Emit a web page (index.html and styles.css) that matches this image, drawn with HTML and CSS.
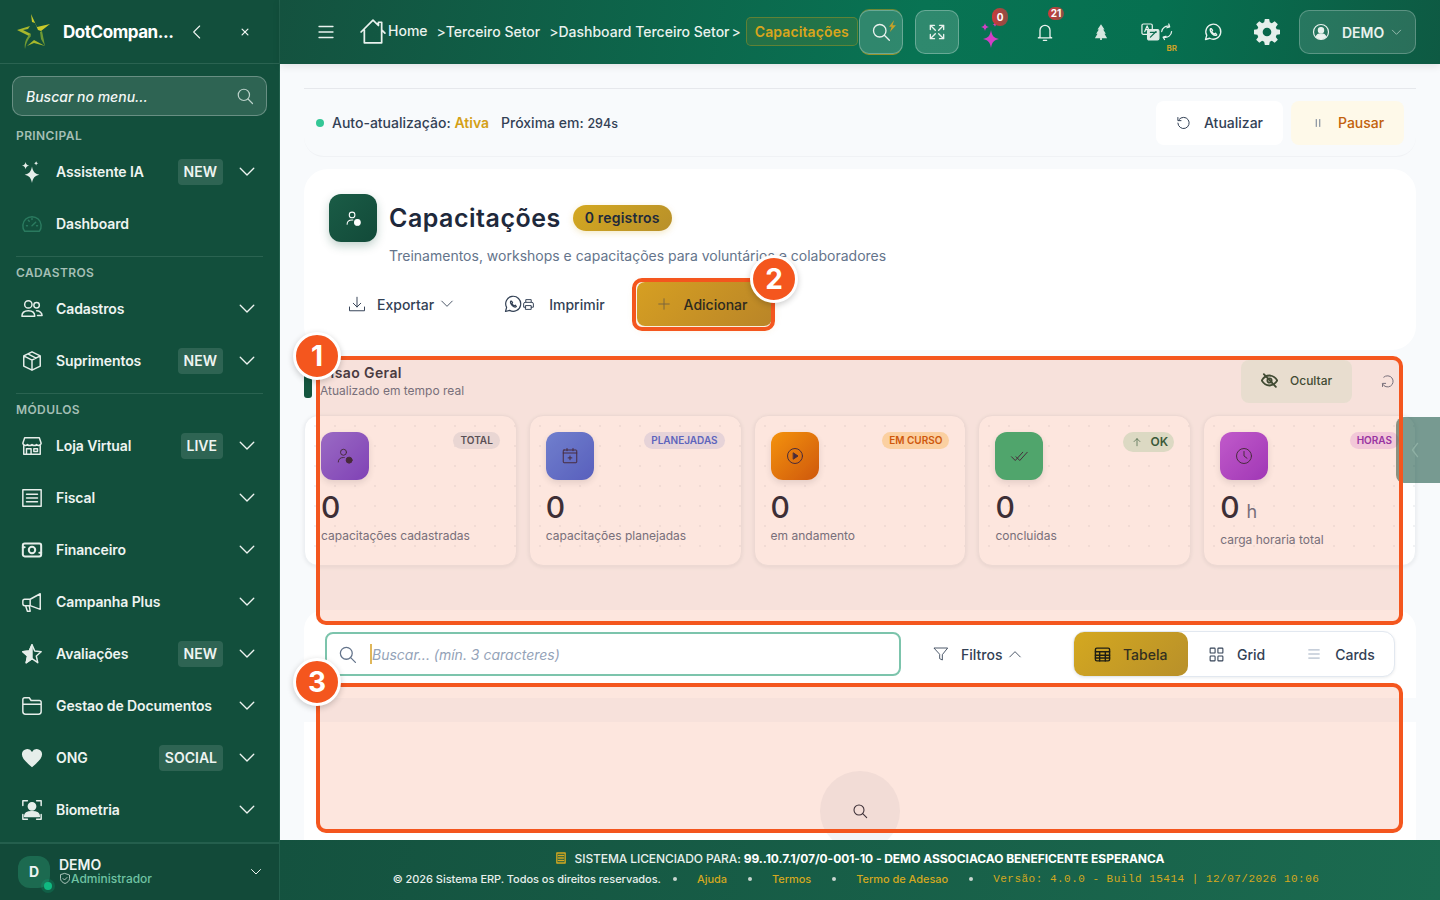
FILE: index.html
```html
<!DOCTYPE html>
<html lang="pt-BR">

<head>
    <meta charset="UTF-8">
    <meta name="viewport" content="width=device-width, initial-scale=1.0">
    <title>Capacitações</title>
    <link rel="stylesheet" href="styles.css">
</head>

<body>
    <svg class="sprite" aria-hidden="true">
        <symbol id="chev-down" viewBox="0 0 24 24"><path d="M3 7l9 9 9-9"/></symbol>
        <symbol id="search" viewBox="0 0 24 24"><circle cx="10.5" cy="10.5" r="7.5"/><path d="M16 16l6 6"/></symbol>
    </svg>

    <div class="app">
        <aside class="sidebar">
            <div class="brand">
                <svg class="brand-logo" viewBox="0 0 36 38">
                    <path class="logo-a" d="M16 1l6 13 13-3-9 7-3-1-3-7-3-1z"/>
                    <path class="logo-b" d="M2 17l13-4-2 3-5 1 8 4-2 2z"/>
                    <path class="logo-c" d="M10 36c-1-6 1-11 5-15l1 2c-3 3-5 7-6 13z"/>
                    <path class="logo-b" d="M12 33l7-6 11 6-11-3-7 3z"/>
                    <path class="logo-c" d="M25 19l2-1 3 15-4-7z"/>
                </svg>
                <span class="brand-name">DotCompan...</span>
                <svg class="brand-back" viewBox="0 0 24 24"><path d="M16 3l-9 9 9 9"/></svg>
                <svg class="brand-close" viewBox="0 0 24 24"><path d="M5 5l14 14M19 5L5 19"/></svg>
            </div>

            <div class="menu-search">
                <span>Buscar no menu...</span>
                <svg class="ico"><use href="#search"/></svg>
            </div>

            <p class="nav-label nav-label-first">PRINCIPAL</p>
            <a class="nav-item">
                <svg class="nav-ico solid" viewBox="0 0 24 24"><path d="M12 6c1 5.500 3 8 8 9-5 1-7 3.500-8 9-1-5.500-3-8-8-9 5-1 7-3.500 8-9zM5 1c.5 2.500 1.500 3.500 4 4-2.500.5-3.500 1.500-4 4-.5-2.500-1.500-3.500-4-4 2.500-.5 3.500-1.500 4-4zM16.500 0c.3 1.500.9 2.200 2.500 2.500-1.600.3-2.200 1-2.500 2.500-.3-1.500-.9-2.200-2.500-2.500 1.600-.3 2.200-1 2.500-2.500z"/></svg>
                <span class="nav-text">Assistente IA</span>
                <span class="tag">NEW</span>
                <svg class="nav-chev"><use href="#chev-down"/></svg>
            </a>
            <a class="nav-item">
                <svg class="nav-ico dim" viewBox="0 0 24 24"><path d="M4 20a10 10 0 1 1 16 0zM12 14l4-4M6 14h1M17 14h1M12 6v1M8 8l1 1"/></svg>
                <span class="nav-text">Dashboard</span>
            </a>

            <p class="nav-label">CADASTROS</p>
            <a class="nav-item">
                <svg class="nav-ico" viewBox="0 0 24 24"><circle cx="8" cy="7" r="4"/><circle cx="17" cy="8" r="3"/><path d="M1 20c0-4 3-6 7-6s7 2 7 6zM17 14c3 0 6 2 6 5h-5"/></svg>
                <span class="nav-text">Cadastros</span>
                <svg class="nav-chev"><use href="#chev-down"/></svg>
            </a>
            <a class="nav-item">
                <svg class="nav-ico" viewBox="0 0 24 24"><path d="M12 2l9 4.500v11L12 22l-9-4.500v-11zM3 6.500L12 11l9-4.500M12 11v11M7.500 4.300l9 4.500"/></svg>
                <span class="nav-text">Suprimentos</span>
                <span class="tag">NEW</span>
                <svg class="nav-chev"><use href="#chev-down"/></svg>
            </a>

            <p class="nav-label">MÓDULOS</p>
            <a class="nav-item">
                <svg class="nav-ico" viewBox="0 0 24 24"><path d="M4 3h16l2 6a3 3 0 0 1-5 1.500 3.500 3.500 0 0 1-5 0 3.500 3.500 0 0 1-5 0A3 3 0 0 1 2 9zM3 12v9h18v-9M6 21v-6h5v6M14 15h4v3h-4z"/></svg>
                <span class="nav-text">Loja Virtual</span>
                <span class="tag">LIVE</span>
                <svg class="nav-chev"><use href="#chev-down"/></svg>
            </a>
            <a class="nav-item">
                <svg class="nav-ico" viewBox="0 0 24 24"><path d="M2 3h20v18H2zM6 8h12M6 12h12M6 16h12"/></svg>
                <span class="nav-text">Fiscal</span>
                <svg class="nav-chev"><use href="#chev-down"/></svg>
            </a>
            <a class="nav-item">
                <svg class="nav-ico thick" viewBox="0 0 24 24"><rect x="2" y="5" width="20" height="14" rx="2"/><circle cx="12" cy="12" r="3.500"/><path d="M2 9h2M20 15h2"/></svg>
                <span class="nav-text">Financeiro</span>
                <svg class="nav-chev"><use href="#chev-down"/></svg>
            </a>
            <a class="nav-item">
                <svg class="nav-ico" viewBox="0 0 24 24"><path d="M21 3v17L10 16H4a2 2 0 0 1-2-2v-3a2 2 0 0 1 2-2h6zM10 9v7M5 16l2 6h3l-1-6"/></svg>
                <span class="nav-text">Campanha Plus</span>
                <svg class="nav-chev"><use href="#chev-down"/></svg>
            </a>
            <a class="nav-item">
                <svg class="nav-ico" viewBox="0 0 24 24"><path d="M12 2l3 6.800 7 .7-5.300 4.700 1.600 7.300L12 17l-6.300 4.500 1.600-7.300L2 9.500l7-.7z"/><path class="fill" d="M12 2l-3 6.800-7 .7 5.300 4.700-1.600 7.300L12 17z"/></svg>
                <span class="nav-text">Avaliações</span>
                <span class="tag">NEW</span>
                <svg class="nav-chev"><use href="#chev-down"/></svg>
            </a>
            <a class="nav-item">
                <svg class="nav-ico" viewBox="0 0 24 24"><path d="M2 8V5a2 2 0 0 1 2-2h5l2 3h9a2 2 0 0 1 2 2v10a3 3 0 0 1-3 3H5a3 3 0 0 1-3-3zM2 10h20"/></svg>
                <span class="nav-text">Gestao de Documentos</span>
                <svg class="nav-chev"><use href="#chev-down"/></svg>
            </a>
            <a class="nav-item">
                <svg class="nav-ico solid" viewBox="0 0 24 24"><path d="M12 22C5 16 1 12.500 1 8a5.800 5.800 0 0 1 11-2.500A5.800 5.800 0 0 1 23 8c0 4.500-4 8-11 14z"/></svg>
                <span class="nav-text">ONG</span>
                <span class="tag">SOCIAL</span>
                <svg class="nav-chev"><use href="#chev-down"/></svg>
            </a>
            <a class="nav-item">
                <svg class="nav-ico" viewBox="0 0 24 24"><path d="M2 7V2h5M17 2h5v5M2 17v5h5M17 22h5v-5"/><circle class="fill" cx="12" cy="8" r="4"/><path class="fill" d="M4 19c0-3 3-5 8-5s8 2 8 5z"/></svg>
                <span class="nav-text">Biometria</span>
                <svg class="nav-chev"><use href="#chev-down"/></svg>
            </a>

            <div class="user-box">
                <div class="avatar">D<i class="online"></i></div>
                <div class="user-info">
                    <strong>DEMO</strong>
                    <span class="user-role">
                        <svg viewBox="0 0 24 24"><path d="M12 2l9 3v7c0 5-4 8-9 10-5-2-9-5-9-10V5zM8 12l3 3 5-5"/></svg>Administrador
                    </span>
                </div>
                <svg class="user-chev"><use href="#chev-down"/></svg>
            </div>
        </aside>

        <div class="main">
            <header class="topbar">
                <svg class="burger" viewBox="0 0 16 14"><path d="M1 1.500h14M1 7h14M1 12.500h14"/></svg>
                <nav class="crumbs">
                    <svg class="crumb-home" viewBox="0 0 24 24"><path d="M1 12L12 1l5 5V3h3v7l3 3M4 10v12h16V10"/></svg>
                    <a class="crumb-first">Home</a>
                    <span class="sep sep-wide">&gt;</span><a>Terceiro Setor</a>
                    <span class="sep sep-wide">&gt;</span><a>Dashboard Terceiro Setor</a>
                    <span class="sep">&gt;</span>
                    <span class="crumb-now">Capacitações</span>
                </nav>
                <div class="top-actions">
                    <button class="top-box top-box-search">
                        <svg class="ico"><use href="#search"/></svg>
                        <svg class="bolt" viewBox="0 0 10 14"><path d="M7 0L1 8h3l-2 6 7-8H5z"/></svg>
                    </button>
                    <button class="top-box">
                        <svg class="ico" viewBox="0 0 24 24"><path d="M4 9V4h5M4 4l6 6M20 9V4h-5M20 4l-6 6M4 15v5h5M4 20l6-6M20 15v5h-5M20 20l-6-6"/></svg>
                    </button>
                    <button class="top-ico top-ico-ai">
                        <svg class="ai-ico" viewBox="0 0 24 28"><path d="M12 10c1 6 3 8 8 9-5 1-7 3-8 9-1-6-3-8-8-9 5-1 7-3 8-9zM6 3c.4 2.500 1.500 3.500 4 4-2.500.5-3.600 1.500-4 4-.4-2.500-1.500-3.500-4-4 2.500-.5 3.600-1.500 4-4zM16 2c.3 1.500.9 2.200 2.500 2.500-1.600.3-2.200 1-2.500 2.500-.3-1.500-.9-2.200-2.500-2.500 1.600-.3 2.200-1 2.500-2.500z"/></svg>
                        <span class="count count-ai">0</span>
                    </button>
                    <button class="top-ico">
                        <svg class="ico" viewBox="0 0 24 24"><path d="M6 18V10a6 6 0 0 1 12 0v8l2 1H4zM10 22h4"/></svg>
                        <span class="count count-bell">21</span>
                    </button>
                    <button class="top-ico">
                        <svg class="tree-ico" viewBox="0 0 16 20"><path d="M8 1l4 6h-1.500l3 5H12l3 5H9v2H7v-2H1l3-5H2.500l3-5H4z"/></svg>
                    </button>
                    <button class="top-ico">
                        <svg class="lang-ico" viewBox="0 0 34 19">
                            <rect x="1" y="1" width="11" height="11" rx="1.500"/>
                            <path d="M4 9l2.500-6L9 9M5 7h3"/>
                            <rect class="lang-back" x="7" y="7" width="12" height="11" rx="1.500"/>
                            <path class="lang-mark" d="M10 15l6-6M10 10h6"/>
                            <path d="M22 9a6.500 6.500 0 0 1 8-5.500M32.500 9a6.500 6.500 0 0 1-8 6M29.500 1l1 3-3 1M25 17.500l-1.500-2.500 3-1"/>
                        </svg>
                        <span class="lang-tag">BR</span>
                    </button>
                    <button class="top-ico">
                        <svg class="ico" viewBox="0 0 24 24"><path d="M3 21l1.500-5A9 9 0 1 1 8 19.500z"/><path d="M9 8c-1 2 0 4 2 6s4 2.600 5.500 1.500L15 13.500l-1.500 1c-1-.5-2-1.500-3-3l1-1.500L10 8z"/></svg>
                    </button>
                    <button class="top-ico top-gear">
                        <svg viewBox="0 0 24 24"><path fill-rule="evenodd" d="M10 1h4l.6 3.100 1.900.8L19.100 3 22 5.900l-1.900 2.600.8 1.900L24 11v4l-3.100.6-.8 1.900 1.900 2.600L19.100 23l-2.600-1.900-1.900.8L14 25h-4l-.6-3.100-1.900-.8L4.900 23 2 20.100l1.900-2.600-.8-1.900L0 15v-4l3.100-.6.8-1.900L2 5.900 4.900 3l2.600 1.900 1.900-.8zM12 9a4 4 0 1 0 0 8 4 4 0 0 0 0-8z" transform="translate(0 -1)"/></svg>
                    </button>
                    <button class="top-user">
                        <svg class="ico" viewBox="0 0 24 24"><circle cx="12" cy="12" r="10"/><circle class="fill" cx="12" cy="9.500" r="3.500"/><path class="fill" d="M5.500 18.500c1-3 3.500-4 6.500-4s5.500 1 6.500 4a10 10 0 0 1-13 0z"/></svg>
                        <span>DEMO</span>
                        <svg class="top-user-chev"><use href="#chev-down"/></svg>
                    </button>
                </div>
            </header>

            <main class="content">
                <section class="refresh-bar">
                    <i class="live-dot"></i>
                    <span class="refresh-status">Auto-atualização: <b>Ativa</b></span>
                    <span class="refresh-next">Próxima em: <small>294s</small></span>
                    <button class="btn-refresh">
                        <svg viewBox="0 0 24 24"><path d="M5 7a9 9 0 1 1-2 6M3 4v5h5"/></svg>Atualizar
                    </button>
                    <button class="btn-pause">
                        <svg viewBox="0 0 24 24"><path d="M9 6v12M15 6v12"/></svg>Pausar
                    </button>
                </section>

                <section class="page-card">
                    <div class="page-head">
                        <div class="page-icon">
                            <svg viewBox="0 0 24 24"><circle cx="10" cy="7" r="4"/><path d="M3 20c0-4 3-6 7-6h1"/><circle class="fill" cx="17.500" cy="17.500" r="4"/></svg>
                        </div>
                        <h1>Capacitações</h1>
                        <span class="count-pill">0 registros</span>
                    </div>
                    <p class="page-sub">Treinamentos, workshops e capacitações para voluntários e colaboradores</p>
                    <div class="page-actions">
                        <button class="btn-plain btn-export">
                            <svg class="ico18" viewBox="0 0 24 24"><path d="M12 3v13M7 11l5 5 5-5M2 16v5h20v-5"/></svg>
                            <span>Exportar</span>
                            <svg class="mini-chev"><use href="#chev-down"/></svg>
                        </button>
                        <button class="btn-plain btn-print">
                            <svg class="ico-wa" viewBox="0 0 24 24"><path d="M2 22l1.500-5.500A10 10 0 1 1 7.500 20.500z"/><path d="M9 8c-1 2 0 4 2 6s4 2.600 5.500 1.500L15 13.500l-1.500 1c-1-.5-2-1.500-3-3l1-1.500L10 8z"/></svg>
                            <svg class="ico-print" viewBox="0 0 24 24"><path d="M7 8V3h10v5M7 17H3v-6a3 3 0 0 1 3-3h12a3 3 0 0 1 3 3v6h-4M7 14h10v7H7z"/></svg>
                            <span>Imprimir</span>
                        </button>
                        <button class="btn-add">
                            <svg viewBox="0 0 24 24"><path d="M12 3v18M3 12h18"/></svg>Adicionar
                        </button>
                    </div>
                </section>

                <section class="overview">
                    <div class="overview-head">
                        <i class="overview-mark"></i>
                        <div class="overview-title">
                            <h2>Visao Geral</h2>
                            <p>Atualizado em tempo real</p>
                        </div>
                        <button class="btn-hide">
                            <svg viewBox="0 0 24 24"><path d="M1 12c3-5 7-7 11-7s8 2 11 7c-3 5-7 7-11 7S4 17 1 12z"/><circle cx="12" cy="12" r="3"/><path d="M4 3l17 18"/></svg>Ocultar
                        </button>
                        <svg class="overview-reload" viewBox="0 0 24 24"><path d="M6 5a9 9 0 1 1-2 11M4 20v-5h5" /></svg>
                    </div>
                    <div class="stats">
                        <article class="stat">
                            <div class="stat-top">
                                <div class="stat-icon grad-purple">
                                    <svg viewBox="0 0 24 24"><circle cx="10" cy="7" r="4"/><path d="M3 20c0-4 3-6 7-6h1"/><circle class="fill" cx="17.500" cy="17.500" r="4"/></svg>
                                </div>
                                <span class="chip chip-gray">TOTAL</span>
                            </div>
                            <div class="stat-num">0</div>
                            <p class="stat-text">capacitações cadastradas</p>
                        </article>
                        <article class="stat">
                            <div class="stat-top">
                                <div class="stat-icon grad-blue">
                                    <svg viewBox="0 0 24 24"><rect x="3" y="4" width="18" height="17" rx="1"/><path d="M3 8h18M8 2v3M16 2v3M12 12v5M9.500 14.500h5"/></svg>
                                </div>
                                <span class="chip chip-blue">PLANEJADAS</span>
                            </div>
                            <div class="stat-num">0</div>
                            <p class="stat-text">capacitações planejadas</p>
                        </article>
                        <article class="stat">
                            <div class="stat-top">
                                <div class="stat-icon grad-orange">
                                    <svg viewBox="0 0 24 24"><circle cx="12" cy="12" r="10"/><path class="fill" d="M10 8l6 4-6 4z"/></svg>
                                </div>
                                <span class="chip chip-orange">EM CURSO</span>
                            </div>
                            <div class="stat-num">0</div>
                            <p class="stat-text">em andamento</p>
                        </article>
                        <article class="stat">
                            <div class="stat-top">
                                <div class="stat-icon grad-green">
                                    <svg viewBox="0 0 24 24"><path d="M2 13l5 5L17 7M8 13l5 5L23 7"/></svg>
                                </div>
                                <span class="chip chip-ok"><svg viewBox="0 0 24 24"><path d="M12 21V4M5 11l7-7 7 7"/></svg>OK</span>
                            </div>
                            <div class="stat-num">0</div>
                            <p class="stat-text">concluidas</p>
                        </article>
                        <article class="stat">
                            <div class="stat-top">
                                <div class="stat-icon grad-violet">
                                    <svg viewBox="0 0 24 24"><circle cx="12" cy="12" r="10"/><path d="M12 6v6l4 3"/></svg>
                                </div>
                                <span class="chip chip-violet">HORAS</span>
                            </div>
                            <div class="stat-num">0<small>h</small></div>
                            <p class="stat-text">carga horaria total</p>
                        </article>
                    </div>
                </section>

                <section class="list-card">
                    <div class="toolbar">
                        <div class="list-search">
                            <svg class="ico"><use href="#search"/></svg>
                            <i class="caret"></i>
                            <span>Buscar... (mín. 3 caracteres)</span>
                        </div>
                        <button class="btn-filter">
                            <svg class="ico-funnel" viewBox="0 0 24 24"><path d="M2 3h20l-8 10v8l-4-2v-6z"/></svg>
                            <span>Filtros</span>
                            <svg class="mini-chev up"><use href="#chev-down"/></svg>
                        </button>
                        <div class="views">
                            <button class="view view-on">
                                <svg viewBox="0 0 24 24"><rect x="2" y="3" width="20" height="18" rx="2"/><path d="M2 8h20M2 13h20M2 17h20M8 8v13M16 8v13"/></svg>Tabela
                            </button>
                            <button class="view view-grid">
                                <svg viewBox="0 0 24 24"><rect x="3" y="3" width="7" height="7" rx="1"/><rect x="14" y="3" width="7" height="7" rx="1"/><rect x="3" y="14" width="7" height="7" rx="1"/><rect x="14" y="14" width="7" height="7" rx="1"/></svg>Grid
                            </button>
                            <button class="view view-cards">
                                <svg viewBox="0 0 24 24"><path d="M3 5h18M3 12h18M3 19h18"/></svg>Cards
                            </button>
                        </div>
                    </div>
                    <div class="table-head"></div>
                    <div class="empty">
                        <div class="empty-circle"><svg class="ico"><use href="#search"/></svg></div>
                    </div>
                </section>
            </main>

            <footer class="footer">
                <p class="footer-lic">
                    <svg viewBox="0 0 12 14"><path d="M1 1h10v12H1zM3 4h6M3 7h6M3 10h6"/></svg>
                    <span>SISTEMA LICENCIADO PARA:</span>
                    <b>99..10.7.1/07/0-001-10 - DEMO ASSOCIACAO BENEFICENTE ESPERANCA</b>
                </p>
                <p class="footer-links">
                    <span>© 2026 Sistema ERP. Todos os direitos reservados.</span>
                    <i></i><a>Ajuda</a>
                    <i></i><a>Termos</a>
                    <i></i><a>Termo de Adesao</a>
                    <i></i><code>Versão: 4.0.0 - Build 15414 | 12/07/2026 10:06</code>
                </p>
            </footer>
        </div>

        <div class="side-handle">
            <svg viewBox="0 0 12 24"><path d="M9 4l-6 8 6 8"/></svg>
        </div>

        <div class="mark mark-stats"></div>
        <div class="mark mark-table"></div>
        <div class="mark-add"></div>
        <span class="step step-1">1</span>
        <span class="step step-2">2</span>
        <span class="step step-3">3</span>
    </div>
</body>

</html>
```

FILE: styles.css
```css
* {
    box-sizing: border-box;
}

body {
    margin: 0;
    font-family: "Inter", "Liberation Sans", sans-serif;
    color: #1e293b;
    background: #f8fafc;
}

p,
h1,
h2 {
    margin: 0;
}

button {
    border: 0;
    background: none;
    padding: 0;
    font: inherit;
    color: inherit;
}

svg {
    display: block;
    fill: none;
    stroke: currentColor;
    stroke-width: 1.6;
    stroke-linecap: round;
    stroke-linejoin: round;
    flex: none;
}

.sprite {
    display: none;
}

.fill {
    fill: currentColor;
}

.ico {
    width: 20px;
    height: 20px;
}

.app {
    position: relative;
    display: flex;
    width: 1440px;
    height: 900px;
    overflow: hidden;
}

/* sidebar */
.sidebar {
    width: 280px;
    flex: none;
    display: flex;
    flex-direction: column;
    background: #124f3c;
    color: #eef4f1;
    border-right: 1px solid #22604d;
}

.brand {
    height: 64px;
    flex: none;
    display: flex;
    align-items: center;
    padding-left: 15px;
    border-bottom: 1px solid #2a6351;
}

.brand-logo {
    width: 36px;
    height: 38px;
    stroke: none;
}

.logo-a {
    fill: #c9c92a;
}

.logo-b {
    fill: #a8b82c;
}

.logo-c {
    fill: #6f9a34;
}

.brand-name {
    margin-left: 12px;
    width: 112px;
    font-size: 17px;
    font-weight: 700;
    letter-spacing: -0.45px;
    color: #fff;
    white-space: nowrap;
}

.brand-back {
    width: 16px;
    height: 16px;
    margin-left: 14px;
}

.brand-close {
    width: 10px;
    height: 10px;
    margin-left: 35px;
    stroke-width: 3;
}

.menu-search {
    margin: 12px 12px 0;
    height: 40px;
    flex: none;
    width: 255px;
    display: flex;
    align-items: center;
    justify-content: space-between;
    padding: 0 12px 0 13px;
    border: 1px solid rgba(255, 255, 255, 0.28);
    border-radius: 10px;
    background: rgba(255, 255, 255, 0.12);
    font-size: 14px;
    font-style: italic;
    font-weight: 500;
    color: #f3f7f5;
}

.menu-search .ico {
    width: 18px;
    height: 18px;
    color: #bcd2ca;
}

.nav-label {
    height: 27px;
    margin: 6px 16px 0;
    padding-top: 8px;
    border-top: 1px solid #2a6351;
    flex: none;
    font-size: 12px;
    font-weight: 600;
    letter-spacing: 0.4px;
    line-height: 16px;
    color: #a4bfb5;
}

.nav-label-first {
    border-top: 0;
    margin-top: 3px;
    padding-top: 9px;
}

.nav-item {
    height: 52px;
    flex: none;
    display: flex;
    align-items: center;
    padding: 0 23px 0 21px;
    font-size: 14px;
    font-weight: 600;
    letter-spacing: -0.1px;
}

.nav-ico {
    width: 22px;
    height: 22px;
    margin-right: 13px;
    color: #e6eeea;
}

.nav-ico.solid {
    fill: currentColor;
    stroke: none;
}

.nav-ico.dim {
    color: #2a7a5f;
}

.nav-ico.thick {
    stroke-width: 2.2;
}

.nav-text {
    flex: 1;
    padding-bottom: 2px;
    white-space: nowrap;
}

.tag {
    height: 26px;
    padding: 0 6px;
    margin-right: 15px;
    border-radius: 4px;
    background: rgba(255, 255, 255, 0.12);
    font-size: 14px;
    font-weight: 600;
    letter-spacing: 0;
    line-height: 26px;
}

.nav-chev {
    width: 18px;
    height: 18px;
    stroke-width: 1.8;
}

.user-box {
    flex: 1;
    display: flex;
    align-items: center;
    margin-top: 6px;
    padding: 0 17px 0 18px;
    border-top: 2px solid #245f4d;
    background: #124a39;
}

.avatar {
    position: relative;
    width: 32px;
    height: 32px;
    border-radius: 12px;
    background: #1c6a50;
    font-size: 14px;
    font-weight: 700;
    line-height: 32px;
    text-align: center;
}

.online {
    position: absolute;
    right: -2px;
    bottom: -2px;
    width: 8px;
    height: 8px;
    border-radius: 50%;
    background: #10b981;
    box-shadow: 0 0 0 3px rgba(16, 185, 129, 0.2);
}

.user-info {
    flex: 1;
    margin-left: 9px;
    display: flex;
    flex-direction: column;
    margin-top: -1px;
}

.user-info strong {
    font-size: 14px;
    line-height: 14px;
    font-weight: 600;
}

.user-role {
    display: flex;
    align-items: center;
    font-size: 12px;
    line-height: 14px;
    font-weight: 500;
    color: #6fc3a3;
}

.user-role svg {
    width: 12px;
    height: 13px;
    color: #cfe2db;
}

.user-chev {
    width: 12px;
    height: 12px;
    stroke-width: 2;
}

/* top bar */
.main {
    flex: 1;
    min-width: 0;
    display: flex;
    flex-direction: column;
}

.topbar {
    height: 64px;
    flex: none;
    display: flex;
    align-items: center;
    padding: 0 24px 0 38px;
    background: linear-gradient(100deg, #14523f 0%, #087353 55%, #067050 75%, #0e5a43 100%);
    color: #e9f2ee;
    box-shadow: 0 2px 8px rgba(0, 0, 0, 0.1);
    z-index: 1;
}

.burger {
    width: 16px;
    height: 14px;
    stroke-width: 1.300;
}

.crumbs {
    display: flex;
    align-items: center;
    margin-left: 26px;
    margin-top: -1px;
    font-size: 14px;
    font-weight: 500;
    letter-spacing: 0;
    white-space: nowrap;
}

.crumb-home {
    width: 26px;
    height: 26px;
    margin-right: 2px;
}

.crumb-first {
    margin-top: -2px;
}

.sep {
    margin-left: 2px;
    font-weight: 400;
}

.sep-wide {
    margin-left: 9px;
    margin-right: 0;
}

.crumb-now {
    margin-left: 5px;
    width: 112px;
    height: 29px;
    padding-left: 8px;
    border: 1px solid rgba(212, 160, 23, 0.35);
    border-radius: 5px;
    background: rgba(212, 160, 23, 0.12);
    color: #d9a51c;
    font-weight: 600;
    line-height: 27px;
    letter-spacing: 0.1px;
}

.top-actions {
    margin-left: auto;
    display: flex;
    align-items: center;
    gap: 12px;
}

.top-box {
    position: relative;
    width: 44px;
    height: 44px;
    display: flex;
    align-items: center;
    justify-content: center;
    border: 1px solid rgba(255, 255, 255, 0.28);
    border-radius: 10px;
    background: rgba(255, 255, 255, 0.16);
}

.top-box-search {
    box-shadow: 0 -2px 0 -1px rgba(212, 160, 23, 0.5), 0 2px 0 -1px rgba(212, 160, 23, 0.7);
}

.bolt {
    position: absolute;
    top: 9px;
    right: 5px;
    width: 9px;
    height: 12px;
    fill: #c9a227;
    stroke: none;
}

.top-ico {
    position: relative;
    width: 44px;
    height: 44px;
    display: flex;
    align-items: center;
    justify-content: center;
}

.top-ico-ai {
    margin-left: -4px;
}

.top-gear {
    margin: 0 -2px;
}

.top-gear svg {
    width: 26px;
    height: 26px;
    fill: #e6efeb;
    stroke: none;
}

.ai-ico {
    width: 24px;
    height: 28px;
    margin-top: 4px;
    margin-left: 4px;
    fill: #d23fc6;
    stroke: none;
}

.tree-ico {
    width: 14px;
    height: 18px;
    fill: #d6e6df;
    stroke: none;
}

.lang-ico {
    width: 32px;
    height: 18px;
    stroke-width: 1.300;
}

.lang-back {
    fill: #dcebe5;
    stroke: #dcebe5;
}

.lang-mark {
    stroke: #0a6a4e;
}

.lang-tag {
    position: absolute;
    right: 2px;
    bottom: 1px;
    font-size: 8px;
    font-weight: 700;
    color: #c9a227;
}

.count {
    position: absolute;
    height: 16px;
    border-radius: 8px;
    font-size: 10px;
    font-weight: 700;
    line-height: 16px;
    text-align: center;
    color: #fff;
    background: linear-gradient(90deg, #cc3b3b, #8a5045);
}

.count-ai {
    top: -2px;
    left: 25px;
    width: 16px;
    height: 18px;
    line-height: 18px;
    border-radius: 9px;
}

.count-bell {
    top: -3px;
    left: 25px;
    width: 16px;
    height: 13px;
    line-height: 13px;
}

.top-user {
    width: 117px;
    height: 44px;
    display: flex;
    align-items: center;
    padding-left: 12px;
    border: 1px solid rgba(255, 255, 255, 0.24);
    border-radius: 10px;
    background: rgba(255, 255, 255, 0.12);
    font-size: 14px;
    font-weight: 600;
}

.top-user .ico {
    width: 18px;
    height: 18px;
}

.top-user span {
    margin-left: 12px;
}

.top-user-chev {
    width: 11px;
    height: 11px;
    margin-left: 7px;
    color: #b9d2c8;
}

/* content */
.content {
    flex: 1;
    min-height: 0;
    overflow: hidden;
    padding: 24px 24px 0;
}

.refresh-bar {
    height: 69px;
    display: flex;
    align-items: center;
    padding: 0 12px;
    border-top: 1px solid #e6e8ec;
    border-bottom: 1px solid #f0f2f5;
    border-radius: 0 0 20px 20px;
    font-size: 14px;
    font-weight: 500;
    color: #334155;
}

.live-dot {
    width: 8px;
    height: 8px;
    margin: 0 8px 0 0;
    border-radius: 50%;
    background: #34c796;
}

.refresh-status b {
    font-weight: 600;
    color: #d4a017;
}

.refresh-next {
    margin-left: 12px;
    margin-right: auto;
}

.refresh-next small {
    font-size: 12.500px;
}

.btn-refresh,
.btn-pause {
    height: 44px;
    display: flex;
    align-items: center;
    border-radius: 8px;
    font-weight: 500;
}

.btn-refresh {
    width: 127px;
    padding-left: 20px;
    background: #fff;
}

.btn-refresh svg {
    width: 15px;
    height: 15px;
    margin-right: 13px;
}

.btn-pause {
    width: 113px;
    margin-left: 8px;
    padding-left: 20px;
    background: #fef9e9;
    color: #c2610c;
}

.btn-pause svg {
    width: 14px;
    height: 14px;
    margin-right: 13px;
    color: #64748b;
}

.page-card {
    height: 181px;
    margin-top: 12px;
    padding: 25px 25px 0;
    border-radius: 24px;
    background: #fff;
}

.page-head {
    display: flex;
    align-items: center;
}

.page-icon {
    width: 48px;
    height: 48px;
    display: flex;
    align-items: center;
    justify-content: center;
    border-radius: 12px;
    background: linear-gradient(135deg, #1a5c46, #124a39);
    box-shadow: 0 4px 10px rgba(18, 79, 60, 0.25);
    color: #fff;
}

.page-icon svg {
    width: 17px;
    height: 17px;
    stroke-width: 1.500;
}

.page-head h1 {
    margin-left: 12px;
    font-size: 25px;
    font-weight: 600;
    letter-spacing: 0.5px;
    color: #1e293b;
}

.count-pill {
    height: 26px;
    margin-left: 12px;
    padding: 0 12px;
    border-radius: 13px;
    background: linear-gradient(135deg, #d4a820, #b8902a);
    box-shadow: 0 2px 6px rgba(212, 168, 32, 0.25);
    font-size: 14px;
    font-weight: 600;
    letter-spacing: 0.2px;
    line-height: 26px;
    color: #1e293b;
}

.page-sub {
    margin: 4px 0 0 60px;
    font-size: 14px;
    line-height: 20px;
    color: #64748b;
}

.page-actions {
    display: flex;
    align-items: center;
    height: 44px;
    margin-top: 16px;
    padding-left: 19px;
    font-size: 14px;
    font-weight: 500;
    color: #334155;
}

.btn-plain {
    display: flex;
    align-items: center;
}

.ico18 {
    width: 18px;
    height: 18px;
    stroke-width: 1.300;
}

.btn-export span {
    margin-left: 11px;
}

.mini-chev {
    width: 14px;
    height: 14px;
    margin-left: 6px;
    stroke-width: 1.500;
}

.mini-chev.up {
    transform: rotate(180deg);
}

.btn-print {
    margin-left: 50px;
}

.ico-wa {
    width: 18px;
    height: 18px;
}

.ico-print {
    width: 13px;
    height: 13px;
    margin-right: 14px;
    stroke-width: 1.800;
}

.btn-add {
    display: flex;
    align-items: center;
    width: 135px;
    height: 44px;
    margin-left: 32px;
    padding-left: 20px;
    border-radius: 8px;
    background: linear-gradient(135deg, #d69f22, #b98528);
    color: #2d2a20;
    box-shadow: 0 2px 10px rgba(214, 159, 34, 0.25);
}

.btn-add svg {
    width: 14px;
    height: 14px;
    margin-right: 13px;
    color: #776440;
}

/* overview */
.overview {
    margin-top: 10px;
}

.overview-head {
    height: 43px;
    display: flex;
    align-items: center;
}

.overview-mark {
    width: 8px;
    height: 32px;
    border-radius: 3px;
    background: #14563f;
}

.overview-title {
    flex: 1;
    margin-left: 8px;
}

.overview-title h2 {
    font-size: 14px;
    line-height: 18px;
    font-weight: 600;
    letter-spacing: 0.4px;
    color: #2d3748;
}

.overview-title p {
    font-size: 12px;
    line-height: 18px;
    color: #64748b;
}

.btn-hide {
    width: 111px;
    height: 43px;
    display: flex;
    align-items: center;
    padding: 0 0 2px 20px;
    border-radius: 8px;
    background: #e7f5ee;
    font-size: 12px;
    font-weight: 500;
    color: #244a38;
}

.btn-hide svg {
    width: 17px;
    height: 17px;
    margin-right: 12px;
    stroke-width: 2.600;
}

.overview-reload {
    width: 15px;
    height: 15px;
    margin-left: 28px;
    margin-right: 21px;
    color: #64748b;
}

.stats {
    display: grid;
    grid-template-columns: repeat(5, 1fr);
    gap: 12px;
    margin-top: 12px;
}

.stat {
    height: 151px;
    padding: 16px;
    border: 1px solid #edf0f3;
    border-radius: 14px;
    background-color: #fff;
    background-image: radial-gradient(rgba(120, 130, 150, 0.1) 1px, transparent 1px);
    background-size: 20px 20px;
    box-shadow: 0 1px 4px rgba(15, 23, 42, 0.08);
}

.stat-top {
    display: flex;
    justify-content: space-between;
    align-items: flex-start;
}

.stat-icon {
    width: 48px;
    height: 48px;
    display: flex;
    align-items: center;
    justify-content: center;
    border-radius: 12px;
    color: #2b2440;
    box-shadow: 0 3px 6px rgba(15, 23, 42, 0.12);
}

.stat-icon svg {
    width: 18px;
    height: 18px;
    stroke-width: 1.300;
}

.grad-purple {
    background: linear-gradient(135deg, #8c6fe0, #6d3fd0);
}

.grad-blue {
    background: linear-gradient(135deg, #5b87ec, #3f62d8);
}

.grad-orange {
    background: linear-gradient(135deg, #f59e0b, #c9590a);
}

.grad-green {
    background: #35b47a;
}

.grad-violet {
    background: linear-gradient(135deg, #b95ce8, #9333d0);
}

.chip {
    height: 17px;
    padding: 0 7px;
    border-radius: 9px;
    font-size: 10px;
    font-weight: 600;
    line-height: 17px;
}

.chip-gray {
    background: #e8edf3;
    color: #41505f;
}

.chip-blue {
    background: #e4e9f8;
    color: #4468d8;
}

.chip-orange {
    background: #fde6b8;
    color: #c9590a;
}

.chip-ok {
    display: flex;
    align-items: center;
    height: 20px;
    padding: 0 6px 0 9px;
    border-radius: 10px;
    background: #d9f0e0;
    font-size: 12px;
    line-height: 20px;
    color: #1a5c3f;
}

.chip-ok svg {
    width: 10px;
    height: 10px;
    margin-right: 9px;
}

.chip-violet {
    background: #f2dcf8;
    color: #8a2fb8;
}

.stat-num {
    margin-top: 9px;
    height: 36px;
    font-size: 30px;
    font-weight: 500;
    line-height: 36px;
    color: #1e293b;
}

.stat-num small {
    margin-left: 7px;
    font-size: 18px;
    font-weight: 400;
    color: #64748b;
}

.stat-text {
    margin-top: 2px;
    font-size: 12px;
    line-height: 18px;
    color: #64748b;
}

.stat:last-child .stat-text {
    margin-top: 6px;
}

/* list */
.list-card {
    height: 400px;
    margin-top: 44px;
    border-radius: 20px;
    background: #fff;
}

.toolbar {
    display: flex;
    align-items: center;
    height: 88px;
    padding: 0 21px;
    font-size: 14px;
    font-weight: 500;
    color: #334155;
}

.list-search {
    width: 576px;
    height: 44px;
    display: flex;
    align-items: center;
    padding-left: 11px;
    border: 2px solid #7cc4ac;
    border-radius: 8px;
    background: #fff;
    font-style: italic;
    font-weight: 400;
    color: #94a3b8;
}

.list-search .ico {
    width: 19px;
    height: 19px;
    color: #64748b;
}

.caret {
    width: 2px;
    height: 20px;
    margin-left: 13px;
    background: #e0b75a;
}

.btn-filter {
    display: flex;
    align-items: center;
    margin-left: 32px;
}

.ico-funnel {
    width: 16px;
    height: 16px;
    margin-right: 12px;
    stroke-width: 1.300;
}

.views {
    display: flex;
    width: 322px;
    height: 46px;
    margin-left: auto;
    border: 1px solid #e2e8f0;
    border-radius: 12px;
    background: #fff;
    box-shadow: 0 1px 3px rgba(15, 23, 42, 0.08);
}

.view {
    display: flex;
    align-items: center;
}

.view svg {
    width: 17px;
    height: 17px;
    stroke-width: 1.500;
}

.view-on {
    width: 114px;
    padding-left: 20px;
    border-radius: 10px;
    background: linear-gradient(135deg, #d4a820, #b8902a);
    color: #33301f;
}

.view-on svg {
    margin-right: 12px;
    color: #1e1e14;
    stroke-width: 2;
}

.view-grid {
    margin-left: 20px;
}

.view-grid svg {
    margin-right: 12px;
}

.view-cards {
    margin-left: 42px;
}

.view-cards svg {
    width: 14px;
    height: 14px;
    margin-right: 14px;
    color: #94a3b8;
}

.table-head {
    height: 24px;
    background: #f8fafc;
}

.empty {
    display: flex;
    justify-content: center;
    padding-top: 49px;
}

.empty-circle {
    width: 80px;
    height: 80px;
    display: flex;
    align-items: center;
    justify-content: center;
    border-radius: 50%;
    background: #f3f4f6;
    color: #1e293b;
}

.empty-circle .ico {
    width: 16px;
    height: 16px;
}

/* footer */
.footer {
    height: 60px;
    flex: none;
    position: relative;
    padding-top: 10px;
    background: linear-gradient(100deg, #14523f, #1b6b50);
    color: #e8f0ec;
    text-align: center;
}

.footer-lic {
    display: flex;
    justify-content: center;
    align-items: center;
    height: 16px;
    font-size: 12px;
    font-weight: 500;
    letter-spacing: -0.1px;
    white-space: nowrap;
}

.footer-lic svg {
    width: 10px;
    height: 12px;
    margin-right: 9px;
    color: #d4a820;
}

.footer-lic b {
    margin-left: 3px;
    font-weight: 700;
    letter-spacing: -0.05px;
    color: #fff;
}

.footer-links {
    display: flex;
    justify-content: center;
    align-items: center;
    margin-top: 5px;
    padding-right: 8px;
    height: 16px;
    font-size: 11px;
    font-weight: 500;
    letter-spacing: -0.04px;
}

.footer-links a {
    color: #d4a820;
}

.footer-links i {
    width: 4px;
    height: 4px;
    margin: 0 20px 0 12px;
    border-radius: 50%;
    background: #c9d6d0;
}

.footer-links a + i {
    margin-left: 21px;
}

.footer-links code {
    font-family: "Liberation Mono", monospace;
    font-size: 11px;
    letter-spacing: 0.49px;
    font-weight: 400;
    color: #d4a820;
}

/* floating handle */
.side-handle {
    position: absolute;
    top: 417px;
    right: 0;
    width: 44px;
    height: 66px;
    display: flex;
    align-items: center;
    padding-left: 14px;
    border-radius: 8px 0 0 8px;
    background: rgba(18, 79, 60, 0.56);
    color: #8fb0a4;
}

.side-handle svg {
    width: 10px;
    height: 20px;
}

/* tour highlights */
.mark {
    position: absolute;
    left: 316px;
    width: 1087px;
    border: 4px solid #f4561e;
    border-radius: 10px;
    background: rgba(244, 81, 30, 0.145);
}

.mark-stats {
    top: 356px;
    height: 269px;
}

.mark-table {
    top: 683px;
    height: 150px;
}

.mark-add {
    position: absolute;
    left: 632px;
    top: 278px;
    width: 143px;
    height: 53px;
    border: 4px solid #f4561e;
    border-radius: 10px;
}

.step {
    position: absolute;
    width: 48px;
    height: 48px;
    border: 3px solid #fff;
    border-radius: 50%;
    background: #f4561e;
    box-shadow: 0 2px 6px rgba(0, 0, 0, 0.2);
    color: #fff;
    font-size: 28px;
    font-weight: 700;
    line-height: 42px;
    text-align: center;
}

.step-1 {
    left: 293px;
    top: 332px;
}

.step-2 {
    left: 750px;
    top: 255px;
}

.step-3 {
    left: 293px;
    top: 658px;
}
```
